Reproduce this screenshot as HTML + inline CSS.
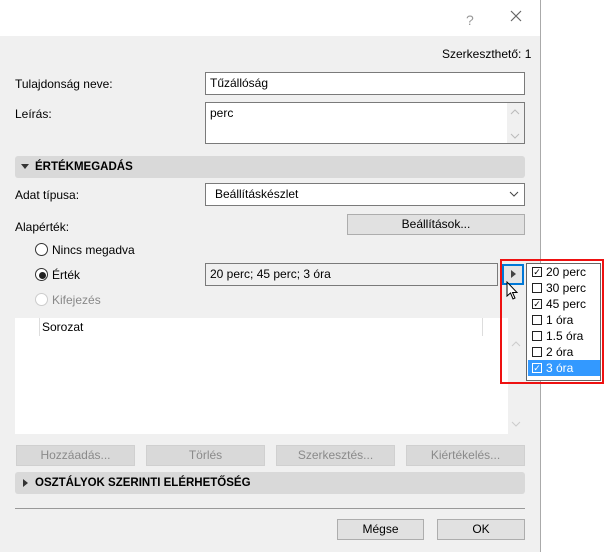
<!DOCTYPE html>
<html><head><meta charset="utf-8"><style>
*{box-sizing:border-box;margin:0;padding:0}
body{width:604px;height:552px;background:#fff;position:relative;overflow:hidden;font-family:"Liberation Sans",sans-serif;font-size:12px;color:#000}
.a{position:absolute}
.dlg{left:0;top:0;width:541px;height:552px;background:#f0f0f0;border-right:1px solid #aaa;border-top:1px solid #aaa}
.title{left:0;top:0;width:540px;height:36px;background:#fff}
.lbl{position:absolute;white-space:nowrap;line-height:14px}
.inp{position:absolute;background:#fff;border:1px solid #7a7a7a;padding:3px 4px;line-height:14px}
.sec{position:absolute;left:15px;width:510px;height:22px;background:#d9d9d9;border-radius:3px;font-weight:bold;font-size:11.5px;line-height:22px;padding-left:20px}
.btn{position:absolute;height:21px;border:1px solid #adadad;background:#e1e1e1;text-align:center;line-height:19px}
.dis{background:#d9d9d9;border-color:#d0d0d0;color:#8a8a8a}
.radio{position:absolute;width:13px;height:13px;border:1px solid #333;border-radius:50%;background:#fff}
.it{position:absolute;left:1px;width:72px;height:16px;line-height:16px;padding-left:18px}
.cb{position:absolute;left:4px;top:3px;width:10px;height:10px;border:1px solid #222;background:#fff;font-size:9px;line-height:8px;text-align:center}
</style></head><body>
<div class="a dlg"></div>
<div class="a title"></div>
<div class="lbl" style="left:466px;top:13px;color:#999;font-size:14px">?</div>
<svg class="a" style="left:510px;top:10px" width="12" height="12"><path d="M1 1L11 11M11 1L1 11" stroke="#666" stroke-width="1.2"/></svg>
<div class="lbl" style="left:442px;top:47px">Szerkeszthető: 1</div>
<div class="lbl" style="left:15px;top:77px">Tulajdonság neve:</div>
<div class="inp" style="left:205px;top:72px;width:320px;height:23px">Tűzállóság</div>
<div class="lbl" style="left:15px;top:107px">Leírás:</div>
<div class="inp" style="left:205px;top:102px;width:320px;height:42px">perc</div>
<div class="a" style="left:507px;top:103px;width:17px;height:40px;background:#f0f0f0"></div>
<svg class="a" style="left:510px;top:108px" width="10" height="34"><path d="M1 6L5 2L9 6M1 26L5 30L9 26" stroke="#bbb" fill="none"/></svg>
<div class="sec" style="top:156px">ÉRTÉKMEGADÁS</div>
<svg class="a" style="left:21px;top:164px" width="8" height="6"><path d="M0 0H8L4 5Z" fill="#333"/></svg>
<div class="lbl" style="left:15px;top:188px">Adat típusa:</div>
<div class="inp" style="left:205px;top:183px;width:320px;height:23px;padding-left:9px">Beállításkészlet</div>
<svg class="a" style="left:509px;top:191px" width="10" height="7"><path d="M1 1L5 5L9 1" stroke="#444" fill="none"/></svg>
<div class="lbl" style="left:15px;top:220px">Alapérték:</div>
<div class="btn" style="left:347px;top:214px;width:178px">Beállítások...</div>
<div class="radio" style="left:35px;top:243px"></div>
<div class="lbl" style="left:52px;top:243px">Nincs megadva</div>
<div class="radio" style="left:35px;top:268px"></div>
<div class="a" style="left:39px;top:272px;width:7px;height:7px;border-radius:50%;background:#222"></div>
<div class="lbl" style="left:52px;top:268px">Érték</div>
<div class="radio" style="left:35px;top:293px;border-color:#ccc"></div>
<div class="lbl" style="left:52px;top:293px;color:#888">Kifejezés</div>
<div class="inp" style="left:205px;top:263px;width:293px;height:23px;background:#f0f0f0;padding-left:4px">20 perc; 45 perc; 3 óra</div>
<div class="a" style="left:502px;top:264px;width:22px;height:21px;border:2px solid #0078d7;background:#e5e5e5"></div>
<svg class="a" style="left:511px;top:270px" width="5" height="8"><path d="M0 0L5 4L0 8Z" fill="#444"/></svg>
<svg class="a" style="left:506px;top:281px" width="14" height="20"><path d="M1 1V15L4.5 12L7 18L9 17L6.5 11.5H11Z" fill="#fff" stroke="#000" stroke-width="1"/></svg>
<div class="a" style="left:15px;top:318px;width:493px;height:116px;background:#fff"></div>
<div class="a" style="left:39px;top:318px;width:1px;height:18px;background:#ddd"></div>
<div class="a" style="left:482px;top:318px;width:1px;height:18px;background:#ddd"></div>
<div class="lbl" style="left:42px;top:320px">Sorozat</div>
<svg class="a" style="left:511px;top:340px" width="10" height="90"><path d="M1 6L5 2L9 6M1 82L5 86L9 82" stroke="#ccc" fill="none"/></svg>
<div class="btn dis" style="left:16px;top:445px;width:119px">Hozzáadás...</div>
<div class="btn dis" style="left:146px;top:445px;width:119px">Törlés</div>
<div class="btn dis" style="left:276px;top:445px;width:119px">Szerkesztés...</div>
<div class="btn dis" style="left:406px;top:445px;width:119px">Kiértékelés...</div>
<div class="sec" style="top:472px">OSZTÁLYOK SZERINTI ELÉRHETŐSÉG</div>
<svg class="a" style="left:23px;top:479px" width="5" height="8"><path d="M0 0L5 4L0 8Z" fill="#333"/></svg>
<div class="a" style="left:15px;top:508px;width:510px;height:1px;background:#999"></div>
<div class="btn" style="left:337px;top:519px;width:87px">Mégse</div>
<div class="btn" style="left:437px;top:519px;width:88px">OK</div>
<div class="a" style="left:500px;top:259px;width:104px;height:125px;border:2px solid #ee1111"></div>
<div class="a" style="left:526px;top:263px;width:75px;height:118px;background:#fff;border:1px solid #666">
<div class="it" style="top:0"><div class="cb">✓</div>20 perc</div>
<div class="it" style="top:16px"><div class="cb"></div>30 perc</div>
<div class="it" style="top:32px"><div class="cb">✓</div>45 perc</div>
<div class="it" style="top:48px"><div class="cb"></div>1 óra</div>
<div class="it" style="top:64px"><div class="cb"></div>1.5 óra</div>
<div class="it" style="top:80px"><div class="cb"></div>2 óra</div>
<div class="it" style="top:96px;background:#3399ff;color:#fff"><div class="cb" style="background:#3399ff;border-color:#fff;color:#fff">✓</div>3 óra</div>
</div>
</body></html>
